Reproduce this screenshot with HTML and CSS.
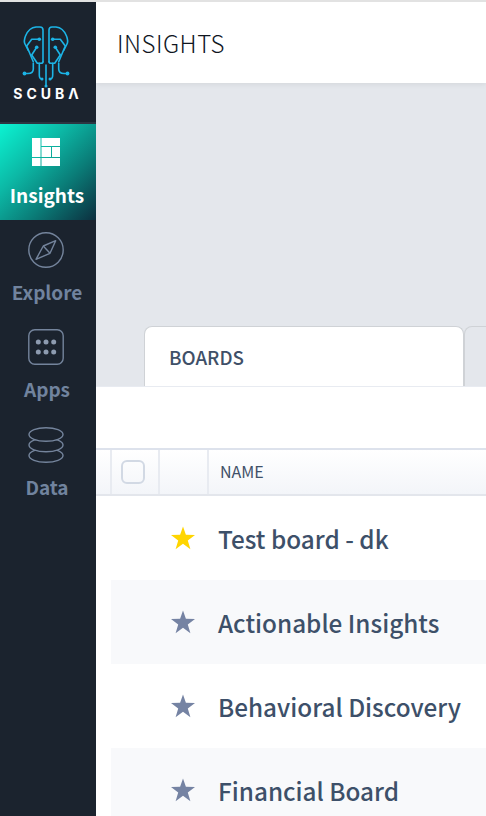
FILE: index.html
```html
<!DOCTYPE html>
<html lang="en">
<head>
  <meta charset="UTF-8" />
  <title>Insights</title>
  <link rel="stylesheet" href="styles.css">
</head>
<body>

<div class="app">
  <nav class="sidebar">
    <div class="logo">
      <svg class="logo-mark" width="48" height="62" viewBox="0 0 48 62" fill="none" stroke="#1cb4e6" stroke-width="1.6" stroke-linecap="round" stroke-linejoin="round">
        <path d="M21 35.700V4q0-3-3-3H14Q7 1.500 3.500 10 1.500 15 3 18l3.300 6.500"/>
        <path d="M17.300 13.300H9.700L4.700 20 11.300 35.700"/>
        <path d="M14.700 21.300L9.700 29 15.300 37.300H19Q21 37.300 21 35.700"/>
        <path d="M11.300 37.300V43Q11.300 47.500 6 47.500H2.500"/>
        <path d="M17.300 37.300V49Q17.300 53 20 53"/>
        <path d="M27 35.700V4q0-3 3-3H34Q41 1.500 44.500 10 46.500 15 45 18l-3.300 6.500"/>
        <path d="M30.700 13.300H38.300L43.300 20 36.700 35.700"/>
        <path d="M33.300 21.300L38.300 29 32.700 37.300H29Q27 37.300 27 35.700"/>
        <path d="M36.700 37.300V43Q36.700 47.500 42 47.500H45.500"/>
        <path d="M30.700 37.300V49Q30.700 53 28 53"/>
        <path d="M24 39V60"/>
        <g fill="#1cb4e6" stroke="none">
          <circle cx="17.300" cy="13.300" r="1.800"/>
          <circle cx="30.700" cy="13.300" r="1.800"/>
          <circle cx="14.700" cy="21.300" r="1.800"/>
          <circle cx="33.300" cy="21.300" r="1.800"/>
          <circle cx="2.500" cy="47.500" r="1.900"/>
          <circle cx="45.500" cy="47.500" r="1.900"/>
          <circle cx="20" cy="53" r="1.500"/>
          <circle cx="28" cy="53" r="1.500"/>
          <circle cx="24" cy="60" r="1.500"/>
        </g>
      </svg>
      <div class="logo-text">SCUB&Lambda;</div>
    </div>

    <a class="nav-item active">
      <svg width="28" height="28" viewBox="0 0 28 28" fill="#fff">
        <rect x="0" y="0" width="8.500" height="19"/>
        <rect x="9.500" y="0" width="18.500" height="8"/>
        <rect x="9.500" y="9" width="9.500" height="10"/>
        <rect x="20" y="9" width="8" height="10"/>
        <rect x="0" y="20" width="8.500" height="8"/>
        <rect x="9.500" y="20" width="18.500" height="8"/>
      </svg>
      <span>Insights</span>
    </a>
    <a class="nav-item">
      <svg width="36" height="36" viewBox="0 0 36 36" fill="none" stroke="#74849c" stroke-width="1.4" stroke-linejoin="round">
        <circle cx="18" cy="18" r="17.200"/>
        <path d="M27.700 8.700L22 21.300 8 27.300 15.300 14z"/>
        <path d="M15.300 14L22 21.300"/>
      </svg>
      <span>Explore</span>
    </a>
    <a class="nav-item">
      <svg width="36" height="36" viewBox="0 0 36 36" fill="none" stroke="#74849c" stroke-width="1.4">
        <rect x="0.800" y="0.800" width="34.400" height="34.400" rx="6"/>
        <g fill="#8d9bb0" stroke="none">
          <circle cx="10.300" cy="13" r="2.500"/>
          <circle cx="18" cy="13" r="2.500"/>
          <circle cx="25.700" cy="13" r="2.500"/>
          <circle cx="10.300" cy="23" r="2.500"/>
          <circle cx="18" cy="23" r="2.500"/>
          <circle cx="25.700" cy="23" r="2.500"/>
        </g>
      </svg>
      <span>Apps</span>
    </a>
    <a class="nav-item">
      <svg width="36" height="36" viewBox="0 0 36 36" fill="none" stroke="#74849c" stroke-width="1.4">
        <ellipse cx="18" cy="28.500" rx="17" ry="6.800"/>
        <ellipse cx="18" cy="18" rx="17" ry="6.800" fill="#1b232e"/>
        <ellipse cx="18" cy="7.500" rx="17" ry="6.800" fill="#1b232e"/>
      </svg>
      <span>Data</span>
    </a>
  </nav>

  <main class="content">
    <header class="topbar">INSIGHTS</header>

    <div class="tabs-area">
      <div class="tab active">BOARDS</div>
      <div class="tab"></div>
    </div>

    <div class="toolbar"></div>

    <div class="table-head">
      <div class="col col-spacer"></div>
      <div class="col col-check"><span class="checkbox"></span></div>
      <div class="col col-star"></div>
      <div class="col col-name">NAME</div>
    </div>

    <div class="row">
      <svg class="star" width="24" height="24" viewBox="0 0 24 24" fill="#ffd500"><path d="M12 0.500l2.900 8.300 9.100.2-7.200 5.500 2.600 8.800L12 17.800l-7.400 5.500 2.600-8.800L0 9l9.100-.2z"/></svg>
      <span>Test board - dk</span>
    </div>
    <div class="row striped">
      <svg class="star" width="24" height="24" viewBox="0 0 24 24" fill="#7583a3"><path d="M12 0.500l2.900 8.300 9.100.2-7.200 5.500 2.600 8.800L12 17.800l-7.400 5.500 2.600-8.800L0 9l9.100-.2z"/></svg>
      <span>Actionable Insights</span>
    </div>
    <div class="row">
      <svg class="star" width="24" height="24" viewBox="0 0 24 24" fill="#7583a3"><path d="M12 0.500l2.900 8.300 9.100.2-7.200 5.500 2.600 8.800L12 17.800l-7.400 5.500 2.600-8.800L0 9l9.100-.2z"/></svg>
      <span>Behavioral Discovery</span>
    </div>
    <div class="row striped">
      <svg class="star" width="24" height="24" viewBox="0 0 24 24" fill="#7583a3"><path d="M12 0.500l2.900 8.300 9.100.2-7.200 5.500 2.600 8.800L12 17.800l-7.400 5.500 2.600-8.800L0 9l9.100-.2z"/></svg>
      <span>Financial Board</span>
    </div>
  </main>
</div>

</body>
</html>
```

FILE: styles.css
```css
html, body {
  margin: 0;
  height: 100%;
  overflow: hidden;
}

body {
  font-family: "Noto Sans CJK SC", "Open Sans", sans-serif;
  background-color: #fff;
  border-top: 2px solid #e2e2e2;
  box-sizing: border-box;
}

.app {
  display: flex;
  height: 814px;
  overflow: hidden;
}

.sidebar {
  width: 96px;
  flex: none;
  background-color: #1b232e;
}

.logo {
  height: 122px;
  border-bottom: 2px solid #2c3642;
  display: flex;
  flex-direction: column;
  align-items: center;
  padding: 24px 4px 0 0;
  box-sizing: border-box;
}

.logo-text {
  color: #fff;
  font-family: "Inter", sans-serif;
  font-size: 14px;
  line-height: 14px;
  font-weight: 700;
  letter-spacing: 4px;
  margin-top: -1px;
  margin-right: -4px;
}

.nav-item {
  display: flex;
  flex-direction: column;
  align-items: center;
  color: #71839e;
  font-size: 19px;
  line-height: 24px;
  font-weight: 700;
  height: 97px;
  padding: 12px 2px 0 0;
  box-sizing: border-box;
}

.nav-item svg {
  margin: 0 2px 12px 0;
}

.nav-item:last-child {
  margin-top: 1px;
}

.nav-item.active {
  color: #fff;
  height: 96px;
  padding-top: 14px;
  background: linear-gradient(135deg, #0cf3d2 0%, #0cb9a6 35%, #0a7d78 65%, #0c2f3f 100%);
}

.nav-item.active svg {
  margin-bottom: 17px;
}

.content {
  flex: 1;
  min-width: 0;
  display: flex;
  flex-direction: column;
}

.topbar {
  height: 81px;
  flex: none;
  padding-left: 21px;
  font-size: 24px;
  font-weight: 300;
  letter-spacing: 0.5px;
  line-height: 82px;
  color: #10161f;
  background-color: #fff;
  box-shadow: 0 1px 6px rgba(0,0,0,0.08);
  position: relative;
}

.tabs-area {
  height: 304px;
  flex: none;
  box-sizing: border-box;
  background-color: #e4e7ec;
  display: flex;
  align-items: flex-end;
  padding-left: 48px;
  border-bottom: 1px solid #e8ebf1;
}

.tab {
  width: 320px;
  height: 60px;
  flex: none;
  box-sizing: border-box;
  border: 1px solid #cfd2d6;
  border-bottom: none;
  border-radius: 8px 8px 0 0;
  padding-left: 24px;
  font-size: 18.75px;
  line-height: 60px;
  font-weight: 500;
  color: #3f5068;
  background-color: #fff;
}

.tab + .tab {
  background-color: #e4e7ec;
}

.toolbar {
  height: 61px;
  flex: none;
}

.table-head {
  height: 48px;
  flex: none;
  display: flex;
  box-sizing: border-box;
  border-top: 2px solid #dde2ec;
  border-bottom: 2px solid #e3e6ec;
  background: linear-gradient(#fff, #f3f5f9);
  font-size: 16px;
  color: #3f5068;
}

.col {
  box-sizing: border-box;
  border-right: 2px solid #e8ebf1;
  display: flex;
  align-items: center;
}

.col-spacer { width: 16px; }
.col-check { width: 48px; justify-content: center; }
.col-star { width: 49px; }
.col-name { flex: 1; border-right: none; padding-left: 11px; padding-bottom: 2px; }

.checkbox {
  width: 24px;
  height: 24px;
  box-sizing: border-box;
  border: 2px solid #d2d9e4;
  border-radius: 6px;
  margin-right: 4px;
}

.row {
  height: 84px;
  flex: none;
  display: flex;
  align-items: center;
  margin-left: 15px;
  padding-left: 60px;
  font-size: 24.3px;
  font-weight: 500;
  color: #3d5069;
}

.row.striped {
  background-color: #f8f9fb;
}

.star {
  margin-right: 23px;
  flex: none;
}
```
